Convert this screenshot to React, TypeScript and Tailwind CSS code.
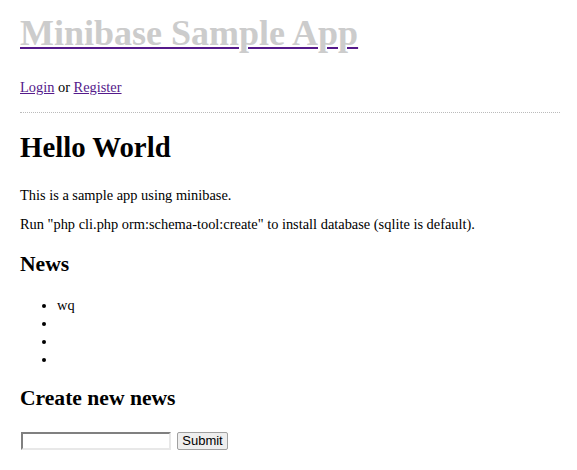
export default function App() {
  return (
    <div className="bg-white pl-5 pr-[17px] pt-[13px] text-black">
      <div className="font-['Liberation_Serif',serif] text-[14.4px]">
        <h1 className="text-[36px] font-bold leading-[40px]">
          <a href="#" className="text-[#cccccc] underline decoration-[#551a8b] decoration-[1.5px] underline-offset-[2px]">
            Minibase Sample App
          </a>
        </h1>
        <p className="mt-[26px] leading-[17px]">
          <a href="#" className="text-[#551a8b] underline">Login</a> or{" "}
          <a href="#" className="text-[#551a8b] underline">Register</a>
        </p>
        <div className="mt-[16px] border-t border-dotted border-[#bbbbbb]" />
        <h1 className="mt-[18px] text-[28.8px] font-bold leading-[33px]">Hello World</h1>
        <p className="mt-[23px] leading-[17px]">This is a sample app using minibase.</p>
        <p className="mt-[12px] leading-[17px]">
          Run "php cli.php orm:schema-tool:create" to install database (sqlite is default).
        </p>
        <h2 className="mt-[19px] text-[21.6px] font-bold leading-[25px]">News</h2>
        <ul className="mt-[19px] list-disc pl-[37px] leading-[18px]">
          <li>wq</li>
          <li>&nbsp;</li>
          <li>&nbsp;</li>
          <li>&nbsp;</li>
        </ul>
        <h2 className="mt-[18px] text-[21.6px] font-bold leading-[25px]">Create new news</h2>
        <form className="mt-[21px] flex items-center gap-[6px]">
          <input
            type="text"
            className="ml-px h-[18px] w-[150px] border-2 border-t-[#808080] border-l-[#808080] border-r-[#e8e8e8] border-b-[#e8e8e8] bg-white"
          />
          <button
            type="button"
            className="h-[18px] w-[51px] rounded-[2px] border border-[#a0a0a0] bg-[#eeeeee] font-['Liberation_Sans',sans-serif] text-[13px] leading-[14px]"
          >
            Submit
          </button>
        </form>
      </div>
    </div>
  );
}
